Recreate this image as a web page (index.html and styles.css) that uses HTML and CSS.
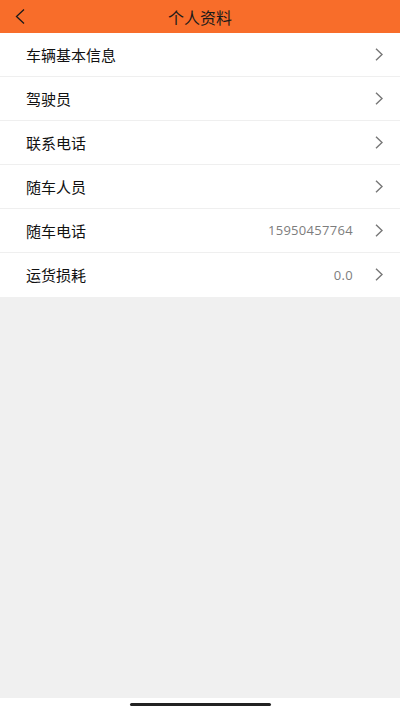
FILE: index.html
```html
<!DOCTYPE html>
<html lang="zh-CN">
<head>
  <meta charset="UTF-8" />
  <meta name="viewport" content="width=device-width, initial-scale=1.0"/>
  <title>个人资料</title>
  <link rel="stylesheet" href="styles.css">
</head>
<body>

  <header class="topbar">
    <a class="back" href="#">
      <svg width="10" height="15" viewBox="0 0 10 15"><path d="M9 0.5 L1.5 7.5 L9 14.5" fill="none" stroke="#1a1a1a" stroke-width="1.3"/></svg>
    </a>
    <h1>个人资料</h1>
  </header>

  <ul class="list">
    <li class="row"><span class="label">车辆基本信息</span><span class="value"></span><svg class="arrow" viewBox="0 0 8 13"><path d="M1 0.8 L7 6.5 L1 12.2" /></svg></li>
    <li class="row"><span class="label">驾驶员</span><span class="value"></span><svg class="arrow" viewBox="0 0 8 13"><path d="M1 0.8 L7 6.5 L1 12.2" /></svg></li>
    <li class="row"><span class="label">联系电话</span><span class="value"></span><svg class="arrow" viewBox="0 0 8 13"><path d="M1 0.8 L7 6.5 L1 12.2" /></svg></li>
    <li class="row"><span class="label">随车人员</span><span class="value"></span><svg class="arrow" viewBox="0 0 8 13"><path d="M1 0.8 L7 6.5 L1 12.2" /></svg></li>
    <li class="row"><span class="label">随车电话</span><span class="value">15950457764</span><svg class="arrow" viewBox="0 0 8 13"><path d="M1 0.8 L7 6.5 L1 12.2" /></svg></li>
    <li class="row"><span class="label">运货损耗</span><span class="value">0.0</span><svg class="arrow" viewBox="0 0 8 13"><path d="M1 0.8 L7 6.5 L1 12.2" /></svg></li>
  </ul>

  <div class="filler"></div>

  <footer class="home-bar">
    <span class="indicator"></span>
  </footer>

</body>
</html>
```

FILE: styles.css
```css
body {
  font-family: "Noto Sans CJK SC", "Liberation Sans", sans-serif;
  margin: 0;
  padding: 0;
  background: #f0f0f0;
  height: 711px;
  display: flex;
  flex-direction: column;
}

.topbar {
  background: #f86d2a;
  height: 33px;
  display: flex;
  align-items: center;
  justify-content: center;
  position: relative;
}

.topbar h1 {
  margin: 0;
  font-size: 16px;
  font-weight: normal;
  color: #1a1a1a;
}

.back {
  position: absolute;
  left: 15px;
  top: 9px;
  display: block;
  line-height: 0;
}

.list {
  list-style: none;
  margin: 0;
  padding: 0;
  background: #fff;
}

.row {
  box-sizing: border-box;
  height: 44px;
  display: flex;
  align-items: center;
  padding: 0 17px 1px 26px;
  border-bottom: 1px solid #efefef;
}

.row:last-child {
  border-bottom: none;
}

.label {
  flex: 1;
  font-size: 15px;
  color: #111;
}

.value {
  font-family: "Open Sans", "Liberation Sans", sans-serif;
  font-size: 13px;
  letter-spacing: 0.3px;
  color: #7d7d7d;
  margin-right: 22px;
}

.arrow {
  width: 8px;
  height: 13px;
  fill: none;
  stroke: #777;
  stroke-width: 1.4;
}

.filler {
  flex: 1;
}

.home-bar {
  height: 13px;
  background: #fff;
  display: flex;
  justify-content: center;
  padding-top: 5px;
  box-sizing: border-box;
}

.indicator {
  width: 141px;
  height: 3px;
  border-radius: 2px;
  background: #222;
}
```
